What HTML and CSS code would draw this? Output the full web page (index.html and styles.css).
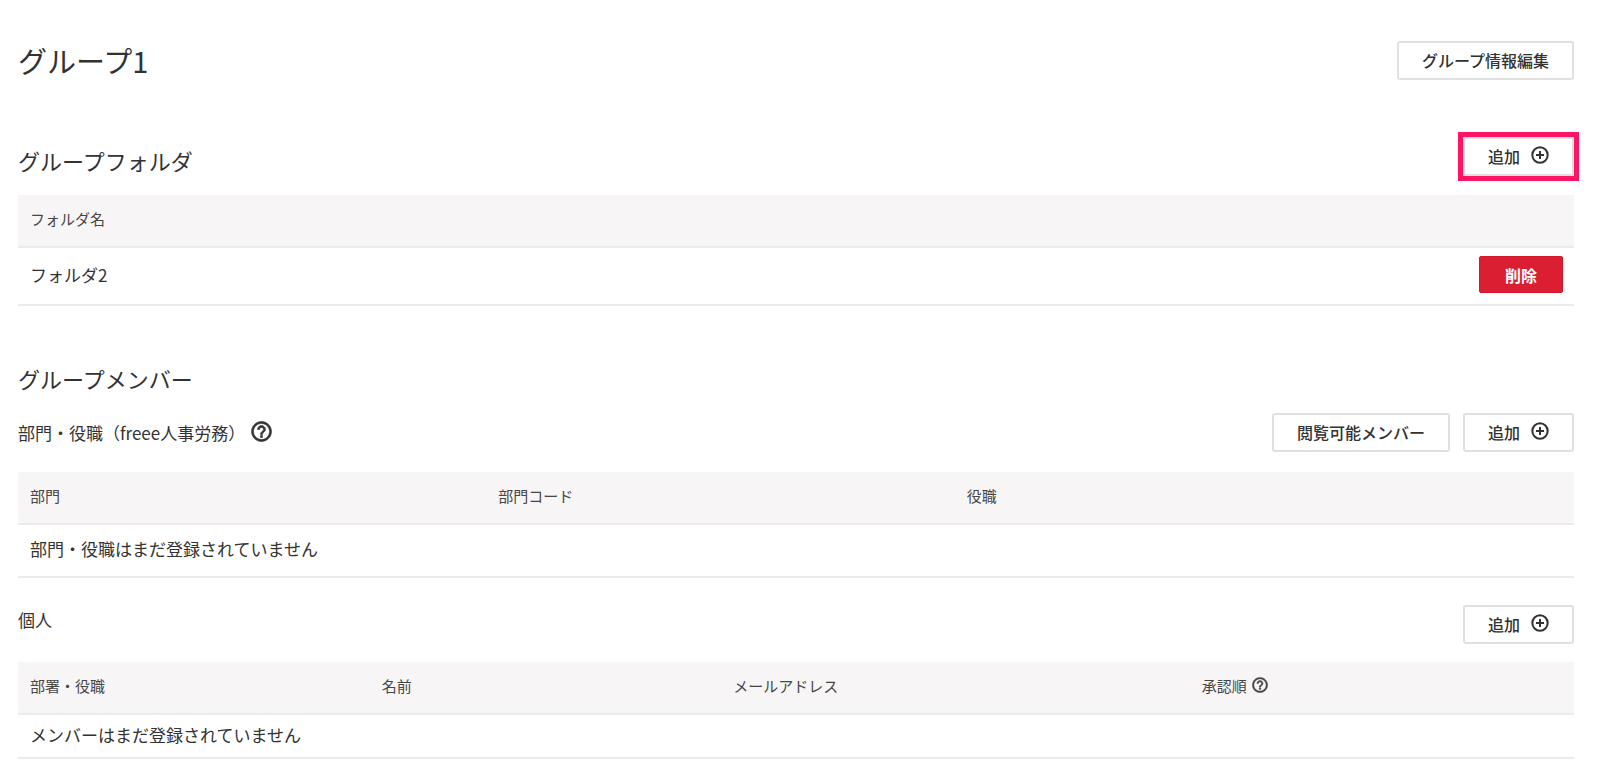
FILE: index.html
```html
<!DOCTYPE html>
<html lang="ja">
<head>
<meta charset="utf-8">
<meta name="viewport" content="width=device-width, initial-scale=1">
<title>グループ1</title>
<link rel="stylesheet" href="styles.css">
</head>
<body>
<svg class="sprite" aria-hidden="true">
  <symbol id="icon-plus" viewBox="0 0 18 18">
    <circle cx="9" cy="9" r="7.700" fill="none" stroke="currentColor" stroke-width="2"/>
    <path d="M9 5v8M5 9h8" fill="none" stroke="currentColor" stroke-width="2"/>
  </symbol>
  <symbol id="icon-help" viewBox="1.500 1.500 21 21">
    <path fill="currentColor" stroke="currentColor" stroke-width="0.600" d="M11 18h2v-2h-2v2zm1-16C6.480 2 2 6.480 2 12s4.480 10 10 10 10-4.480 10-10S17.520 2 12 2zm0 18c-4.410 0-8-3.590-8-8s3.590-8 8-8 8 3.590 8 8-3.590 8-8 8zm0-14c-2.210 0-4 1.790-4 4h2c0-1.100.9-2 2-2s2 .9 2 2c0 2-3 1.750-3 5h2c0-2.250 3-2.500 3-5 0-2.210-1.790-4-4-4z"/>
  </symbol>
</svg>
<main class="page">
  <header class="bar page-header">
    <h1 class="title">グループ1</h1>
    <button type="button" class="btn">グループ情報編集</button>
  </header>

  <section class="folders">
    <div class="bar folders-bar">
      <h2 class="heading">グループフォルダ</h2>
      <button type="button" class="btn btn-highlight">追加<svg class="icon-plus" aria-hidden="true"><use href="#icon-plus"/></svg></button>
    </div>
    <table class="table">
      <thead>
        <tr><th scope="col" colspan="2">フォルダ名</th></tr>
      </thead>
      <tbody>
        <tr>
          <td>フォルダ2</td>
          <td class="actions"><button type="button" class="btn-danger">削除</button></td>
        </tr>
      </tbody>
    </table>
  </section>

  <section class="members">
    <h2 class="heading">グループメンバー</h2>

    <div class="bar members-bar">
      <h3 class="subheading">部門・役職（freee人事労務）<button type="button" class="help" aria-label="ヘルプ"><svg class="icon-help" aria-hidden="true"><use href="#icon-help"/></svg></button></h3>
      <div class="buttons">
        <button type="button" class="btn">閲覧可能メンバー</button>
        <button type="button" class="btn">追加<svg class="icon-plus" aria-hidden="true"><use href="#icon-plus"/></svg></button>
      </div>
    </div>
    <table class="table table-empty">
      <colgroup><col class="col-wide"><col class="col-wide"><col></colgroup>
      <thead>
        <tr><th scope="col">部門</th><th scope="col">部門コード</th><th scope="col">役職</th></tr>
      </thead>
      <tbody>
        <tr><td colspan="3">部門・役職はまだ登録されていません</td></tr>
      </tbody>
    </table>

    <div class="bar person-bar">
      <h3 class="subheading">個人</h3>
      <button type="button" class="btn">追加<svg class="icon-plus" aria-hidden="true"><use href="#icon-plus"/></svg></button>
    </div>
    <table class="table table-compact">
      <colgroup><col class="col-narrow"><col class="col-narrow"><col class="col-wide"><col></colgroup>
      <thead>
        <tr>
          <th scope="col">部署・役職</th>
          <th scope="col">名前</th>
          <th scope="col">メールアドレス</th>
          <th scope="col"><span class="th-help">承認順<button type="button" class="help" aria-label="承認順のヘルプ"><svg class="icon-help-small" aria-hidden="true"><use href="#icon-help"/></svg></button></span></th>
        </tr>
      </thead>
      <tbody>
        <tr><td colspan="4">メンバーはまだ登録されていません</td></tr>
      </tbody>
    </table>
  </section>
</main>
</body>
</html>
```
FILE: styles.css
```css
* {
  box-sizing: border-box;
}

body {
  margin: 0;
  background: #fff;
  color: #323232;
  font-family: "Noto Sans CJK JP", "Noto Sans", sans-serif;
  font-size: 17px;
  line-height: 24px;
}

.sprite {
  display: none;
}

.page {
  padding: 41px 26px 24px 18px;
}

.bar {
  display: flex;
  align-items: center;
  justify-content: space-between;
}

.title,
.heading,
.subheading {
  margin: 0;
  font-weight: 400;
}

.title {
  font-size: 29px;
  line-height: 39px;
}

.heading {
  font-size: 22px;
  line-height: 32px;
}

.subheading {
  display: flex;
  align-items: center;
  gap: 6px;
  font-size: 17px;
}

.btn {
  display: inline-flex;
  align-items: center;
  justify-content: center;
  gap: 11px;
  height: 39px;
  padding: 0 23px 2px;
  border: 2px solid #e0e0e0;
  border-radius: 3px;
  background: #fff;
  color: inherit;
  font: 500 16px/24px "Noto Sans CJK JP", "Noto Sans", sans-serif;
}

.btn-highlight {
  outline: 5px solid #ff1464;
  border-radius: 0;
}

.btn-danger {
  height: 37px;
  padding: 0 25px;
  border: 1px solid #d01828;
  border-radius: 2px;
  background: #dc1e32;
  color: #fff;
  font: 700 16px/24px "Noto Sans CJK JP", "Noto Sans", sans-serif;
}

.buttons {
  display: flex;
  gap: 13px;
}

.help {
  display: inline-flex;
  padding: 0;
  border: 0;
  background: none;
  color: inherit;
}

.icon-plus {
  width: 18px;
  height: 18px;
  margin-bottom: 1px;
}

.icon-help {
  width: 21px;
  height: 21px;
  margin-bottom: 3px;
}

.icon-help-small {
  width: 16px;
  height: 16px;
  margin-bottom: 3px;
}

.folders {
  margin-top: 57px;
}

.folders-bar {
  align-items: flex-end;
}

.folders .table {
  margin-top: 19px;
}

.members {
  margin-top: 56px;
}

.members-bar {
  margin-top: 19px;
}

.members-bar + .table {
  margin-top: 20px;
}

.person-bar {
  align-items: flex-start;
  margin-top: 27px;
}

.person-bar .subheading {
  padding-top: 3px;
}

.person-bar + .table {
  margin-top: 18px;
}

.table {
  width: 100%;
  border-collapse: separate;
  border-spacing: 0;
  table-layout: fixed;
}

.table th,
.table td {
  padding: 0 12px 3px;
  border-bottom: 2px solid #e9ebef;
  text-align: left;
  font-weight: 400;
}

.table th {
  height: 53px;
  background: #f7f5f6;
  color: #464646;
  font-size: 15px;
}

.table td {
  height: 58px;
}

.table .actions {
  padding-right: 11px;
  text-align: right;
}

.table-empty td {
  height: 53px;
}

.table-compact td {
  height: 44px;
}

.col-wide {
  width: 30.1%;
}

.col-narrow {
  width: 22.6%;
}

.th-help {
  display: inline-flex;
  align-items: center;
  gap: 5px;
}
```
